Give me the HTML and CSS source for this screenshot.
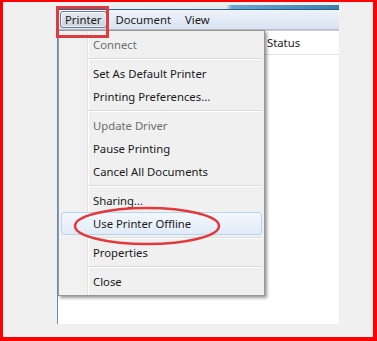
FILE: index.html
```html
<!DOCTYPE html>
<html lang="en">

<head>
    <meta charset="UTF-8">
    <meta name="viewport" content="width=device-width, initial-scale=1.0">
    <link rel="stylesheet" href="styles.css">
    <title>Printer</title>
</head>

<body>

    <div class="frame">
        <div class="window">
            <div class="titlebar"></div>
            <div class="menubar">
                <span class="menu-title aberto">Printer</span>
                <span class="menu-title">Document</span>
                <span class="menu-title">View</span>
            </div>
            <div class="conteudo">
                <div class="cabecalho"><span>Status</span></div>
            </div>

            <div class="dropdown">
                <div class="item desativado">Connect</div>
                <div class="sep"></div>
                <div class="item">Set As Default Printer</div>
                <div class="item">Printing Preferences...</div>
                <div class="sep"></div>
                <div class="item desativado">Update Driver</div>
                <div class="item">Pause Printing</div>
                <div class="item">Cancel All Documents</div>
                <div class="sep"></div>
                <div class="item">Sharing...</div>
                <div class="item destaque">Use Printer Offline</div>
                <div class="sep"></div>
                <div class="item">Properties</div>
                <div class="sep"></div>
                <div class="item">Close</div>
            </div>

            <div class="marca-caixa"></div>
            <svg class="marca-elipse" width="150" height="42" viewBox="0 0 150 42">
                <ellipse cx="75" cy="21" rx="72" ry="18" fill="none" stroke="#e03a3c" stroke-width="2.5"/>
            </svg>
        </div>
    </div>

</body>
</html>
```

FILE: styles.css
```css
body {
    margin: 0;
    font-family: "Noto Sans", "Liberation Sans", sans-serif;
    font-size: 11.3px;
    color: #1a1a1a;
}

.frame {
    box-sizing: border-box;
    width: 377px;
    height: 341px;
    border-style: solid;
    border-color: #ff0000;
    border-width: 2px 4px 4px 3px;
    background: #f0f0f0;
    padding: 3px 0 0 54px;
}

.window {
    position: relative;
    width: 282px;
    height: 319px;
    display: flex;
    flex-direction: column;
}

.titlebar {
    height: 5px;
    background: linear-gradient(to right, #eef0f2 0%, #e4e9ee 60%, #6aa6cf 62%, #3d7fb0 100%);
    border-bottom: 1px solid #2c5f8a;
    box-sizing: border-box;
}

.menubar {
    height: 20px;
    box-sizing: border-box;
    display: flex;
    align-items: center;
    gap: 4px;
    padding-left: 3px;
    background: linear-gradient(#eef3fa, #d9e3f2);
    border-bottom: 1px solid #b7bfca;
}

.menu-title {
    height: 17px;
    line-height: 15px;
    box-sizing: border-box;
    padding: 0 4px;
    border: 1px solid transparent;
    border-radius: 3px;
}

.menu-title.aberto {
    border-color: #6f7e8e;
    background: linear-gradient(#e8ecf1, #c9d2dc);
    box-shadow: inset 0 0 0 1px rgba(255, 255, 255, 0.6);
}

.conteudo {
    flex: 1;
    background: #fff;
    border-left: 1px solid #5d93c4;
}

.cabecalho {
    height: 25px;
    line-height: 24px;
    padding-left: 209px;
    border-top: 1px solid #c9cdd2;
    border-bottom: 1px solid #e2e2e2;
    box-sizing: border-box;
}

.dropdown {
    position: absolute;
    left: 1px;
    top: 25px;
    width: 207px;
    box-sizing: border-box;
    padding: 2px;
    border: 1px solid #979797;
    background: linear-gradient(to right, #f1f1f1 28px, #e2e3e3 28px, #e2e3e3 29px, #fff 29px, #fff 30px, #f0f0f0 30px);
    box-shadow: 2px 2px 3px rgba(0, 0, 0, 0.4);
}

.item {
    height: 23px;
    line-height: 21px;
    box-sizing: border-box;
    padding-left: 31px;
    border: 1px solid transparent;
    border-radius: 3px;
}

.desativado {
    color: #6d6d6d;
}

.destaque {
    border-color: #b8d3ec;
    background: linear-gradient(#f2f7fd, #e1ebf7);
}

.sep {
    height: 1px;
    margin: 2px 0 2px 27px;
    background: #dcdcdc;
    border-bottom: 1px solid #fff;
}

.marca-caixa {
    position: absolute;
    left: -1px;
    top: 1px;
    width: 53px;
    height: 32px;
    box-sizing: border-box;
    border: 3px solid #dc3b3f;
}

.marca-elipse {
    position: absolute;
    left: 15px;
    top: 200px;
}
```
